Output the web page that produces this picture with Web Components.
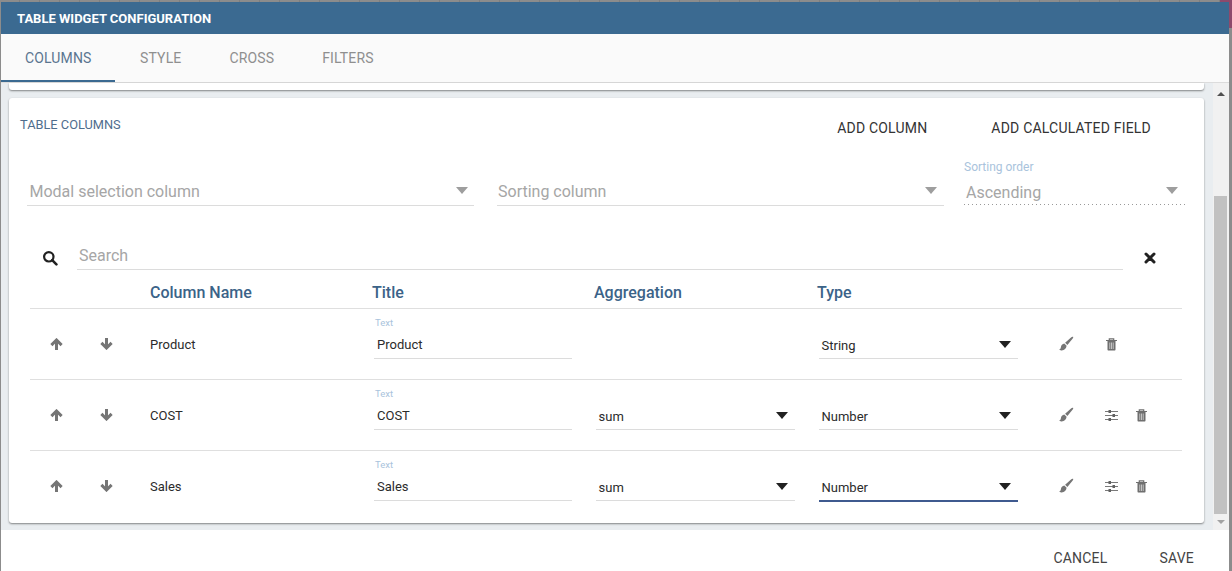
<!DOCTYPE html>
<html>
<head>
<meta charset="utf-8">
<title>Table widget configuration</title>
<style>
    html, body { margin: 0; height: 100%; overflow: hidden; }
    body {
        background:
            linear-gradient(#8d4a6c, #8d4a6c) right top / 12px 2px no-repeat,
            linear-gradient(#8d4a6c, #8d4a6c) right top / 3px 28px no-repeat,
            #8c8c8c repeating-linear-gradient(90deg, #8c8c8c 0 19px, #7f7f7f 19px 20px);
        font-family: Roboto, "Liberation Sans", sans-serif;
    }
</style>
</head>
<body>
<config-dialog heading="TABLE WIDGET CONFIGURATION">
    <column-row slot="rows" name="Product" coltype="String"></column-row>
    <column-row slot="rows" name="COST" aggregation="sum" coltype="Number"></column-row>
    <column-row slot="rows" name="Sales" aggregation="sum" coltype="Number" focused last></column-row>
</config-dialog>

<script>
const ICONS = {
    up: '<svg viewBox="0 0 13 12" width="13" height="12"><path d="M6.5 2V12M1.4 7.1 6.5 2l5.1 5.1" fill="none" stroke="#757575" stroke-width="3"/></svg>',
    down: '<svg viewBox="0 0 13 12" width="13" height="12"><path d="M6.5 0V10M1.4 4.9 6.5 10l5.1-5.1" fill="none" stroke="#757575" stroke-width="3"/></svg>',
    search: '<svg viewBox="0 0 16 16" width="16" height="16"><circle cx="6.8" cy="6.8" r="4.7" fill="none" stroke="#212121" stroke-width="2.2"/><path d="M10.2 10.2 14.4 14.4" stroke="#212121" stroke-width="2.6" stroke-linecap="round"/></svg>',
    close: '<svg viewBox="0 0 12 12" width="12" height="12"><path d="M2 2 10 10M10 2 2 10" stroke="#212121" stroke-width="3" stroke-linecap="round"/></svg>',
    brush: '<svg viewBox="0 0 16 16" width="16" height="16"><path d="M15 .8c.5.4.2 1.1-.3 1.7L9.4 8.9 7.1 6.8 13.3 1.3C13.9.8 14.5.4 15 .8Z" fill="#757575"/><path d="M6.3 7.6 8.6 9.7C8.4 12.3 6.5 14.2 3.6 14.4 2.6 14.5 1.6 14.2 1 13.6 2.4 13.3 2.7 12.6 2.9 11.3 3.1 9.3 4.5 8 6.3 7.6Z" fill="#757575"/></svg>',
    tune: '<svg viewBox="0 0 13 13" width="13" height="13"><path d="M0 2.5H13M0 6.5H13M0 10.5H13" stroke="#7a7a7a" stroke-width="1"/><path d="M3.5 1h2.5v3H3.5zM7.5 5h2.5v3H7.5zM3.5 9h2.5v3H3.5z" fill="#616161"/></svg>',
    trash: '<svg viewBox="0 0 11 13" width="11" height="13"><path d="M0 2.5h11M3.3 2.5V.8h4.4v1.7" fill="none" stroke="#6f6f6f" stroke-width="1.2"/><path d="M1.5 3v8.5c0 .6.4 1 1 1h6c.6 0 1-.4 1-1V3Z" fill="#6f6f6f"/><path d="M3.8 4.5v6.5M5.5 4.5v6.5M7.2 4.5v6.5" stroke="#d9d9d9" stroke-width=".8"/></svg>'
};

class IconButton extends HTMLElement {
    constructor() {
        super();
        this.attachShadow({ mode: 'open' });
    }

    connectedCallback() {
        this.shadowRoot.innerHTML = `
            <style>
                :host { display: inline-flex; align-items: center; justify-content: center; }
                svg { display: block; }
            </style>
            ${ICONS[this.getAttribute('icon')]}
        `;
    }
}

class SelectField extends HTMLElement {
    constructor() {
        super();
        this.attachShadow({ mode: 'open' });
    }

    connectedCallback() {
        const label = this.getAttribute('label');
        const value = this.getAttribute('value') || '';
        this.shadowRoot.innerHTML = `
            <style>
                :host {
                    display: block;
                    --line: #dcdcdc;
                    --text: #2b2b2b;
                    --arrow: #212121;
                    --size: 13px;
                    --arrow-right: 7px;
                }
                :host([disabled]) {
                    --text: #a6a6a6;
                    --arrow: #9e9e9e;
                    --size: 16px;
                    --arrow-right: 6px;
                }
                .label { height: 14px; font-size: 12px; line-height: 14px; margin-bottom: 4px; color: #a9c3dc; }
                .box {
                    position: relative;
                    display: flex;
                    align-items: center;
                    box-sizing: border-box;
                    height: 27px;
                    padding-top: 1px;
                    padding-left: var(--pad, 3px);
                    border-bottom: 1px solid var(--line);
                    font-size: var(--size);
                    color: var(--text);
                }
                :host([disabled]) .box { padding-top: 0; padding-bottom: 2px; }
                :host([disabled]) .arrow { margin-top: -5px; }
                :host([dotted]) .box {
                    border-bottom: none;
                    padding-top: 1px;
                    padding-bottom: 0;
                    background: linear-gradient(90deg, #999 1px, transparent 1px) left bottom / 4px 1px repeat-x;
                }
                :host([focused]) .box { border-bottom: 2px solid #3f5a8f; height: 28px; }
                .arrow {
                    position: absolute;
                    right: var(--arrow-right);
                    top: 50%;
                    margin-top: -4px;
                    border-left: 6.5px solid transparent;
                    border-right: 6.5px solid transparent;
                    border-top: 7px solid var(--arrow);
                }
            </style>
            ${label ? `<div class="label">${label}</div>` : ''}
            <div class="box"><span>${value}</span><span class="arrow"></span></div>
        `;
    }
}

class TextField extends HTMLElement {
    constructor() {
        super();
        this.attachShadow({ mode: 'open' });
    }

    connectedCallback() {
        this.shadowRoot.innerHTML = `
            <style>
                :host { display: block; }
                .label { height: 11px; font-size: 9.5px; line-height: 11px; padding-left: 1px; color: #a9c3dc; }
                .box {
                    box-sizing: border-box;
                    height: 31px;
                    padding: 9px 0 0 3px;
                    line-height: 16px;
                    font-size: 13px;
                    color: #2b2b2b;
                    border-bottom: 1px solid #dcdcdc;
                }
            </style>
            <div class="label">${this.getAttribute('label')}</div>
            <div class="box">${this.getAttribute('value')}</div>
        `;
    }
}

class ColumnRow extends HTMLElement {
    constructor() {
        super();
        this.attachShadow({ mode: 'open' });
    }

    connectedCallback() {
        const name = this.getAttribute('name');
        const aggregation = this.getAttribute('aggregation');
        const focused = this.hasAttribute('focused') ? 'focused' : '';
        this.shadowRoot.innerHTML = `
            <style>
                :host {
                    display: grid;
                    grid-template-columns: 53px 46px 243px 222px 223px 223px 1fr;
                    align-items: center;
                    box-sizing: border-box;
                    height: 71px;
                    border-bottom: 1px solid #dfdfdf;
                    font-size: 13px;
                    color: #2b2b2b;
                }
                :host([last]) { height: 70px; border-bottom: none; }
                .name { padding-left: 21px; }
                .cell { align-self: start; padding: 0 22px 0 2px; }
                .title { padding-top: 8px; }
                .select { padding-top: 23px; }
                select-field { --pad: 2.5px; }
                .tools { display: flex; align-items: center; padding-left: 18px; }
                .brush { width: 16px; margin-right: 31px; }
                .brush.solo { margin-right: 32px; }
                .tune { width: 13px; margin-right: 18px; }
            </style>
            <icon-button icon="up"></icon-button>
            <icon-button icon="down"></icon-button>
            <div class="name">${name}</div>
            <div class="cell title"><text-field label="Text" value="${name}"></text-field></div>
            <div class="cell select">${aggregation ? `<select-field value="${aggregation}"></select-field>` : ''}</div>
            <div class="cell select"><select-field value="${this.getAttribute('coltype')}" ${focused}></select-field></div>
            <div class="tools">
                <icon-button class="brush ${aggregation ? '' : 'solo'}" icon="brush"></icon-button>
                ${aggregation ? '<icon-button class="tune" icon="tune"></icon-button>' : ''}
                <icon-button icon="trash"></icon-button>
            </div>
        `;
    }
}

class ConfigDialog extends HTMLElement {
    constructor() {
        super();
        this.attachShadow({ mode: 'open' });
    }

    connectedCallback() {
        const tabs = ['COLUMNS', 'STYLE', 'CROSS', 'FILTERS'];
        this.shadowRoot.innerHTML = `
            <style>
                :host {
                    display: flex;
                    flex-direction: column;
                    box-sizing: border-box;
                    height: 571px;
                    margin: 0 3px 0 1px;
                    padding-top: 2px;
                    font-family: Roboto, "Liberation Sans", sans-serif;
                }
                header {
                    height: 32px;
                    flex: none;
                    display: flex;
                    align-items: center;
                    padding-left: 16px;
                    background: #3b6a91;
                    color: #fff;
                    font-size: 13px;
                    font-weight: 700;
                }
                nav {
                    display: flex;
                    flex: none;
                    box-sizing: border-box;
                    height: 49px;
                    background: #fafafa;
                    border-bottom: 1px solid #dcdcdc;
                }
                nav a {
                    box-sizing: border-box;
                    height: 48px;
                    line-height: 48px;
                    padding: 0 24px;
                    font-size: 14px;
                    letter-spacing: .15px;
                    color: #8f8f8f;
                }
                nav a.active { color: #5b7590; border-bottom: 2px solid #3b6a91; width: 114px; margin-right: 1px; white-space: nowrap; }
                .body {
                    flex: 1;
                    min-height: 0;
                    display: flex;
                    background: #e9edf0;
                }
                .scroller {
                    flex: 1;
                    min-width: 0;
                    padding: 0 9px 0 8px;
                }
                .stub {
                    height: 7px;
                    background: #fff;
                    border-radius: 0 0 3px 3px;
                    box-shadow: 0 1px 2px rgba(0,0,0,.45);
                    margin-bottom: 8px;
                }
                .card {
                    box-sizing: border-box;
                    height: 425px;
                    padding: 0 22px 0 11px;
                    background: #fff;
                    border-radius: 3px;
                    box-shadow: 0 1px 2px rgba(0,0,0,.45);
                }
                .title-row {
                    display: flex;
                    justify-content: space-between;
                    height: 62px;
                }
                .title { font-size: 12.8px; line-height: 14px; padding-top: 20px; color: #4f6d8d; }
                .actions { display: flex; gap: 64px; padding: 22px 31px 0 0; }
                .actions span { font-size: 14px; line-height: 16px; letter-spacing: .2px; color: #333; }
                .filters {
                    display: grid;
                    grid-template-columns: 447px 447px 222px;
                    column-gap: 23px;
                    margin-left: 7px;
                    align-items: end;
                }
                .filters select-field:nth-child(1) { --pad: 2.5px; }
                .filters select-field:nth-child(2) { --pad: 1px; --arrow-right: 7px; }
                .filters select-field:nth-child(3) { margin: 0 3px 1px -3px; --pad: 2px; --arrow-right: 8px; }
                .search {
                    display: flex;
                    align-items: center;
                    height: 35px;
                    margin-top: 31px;
                    margin-left: 10px;
                }
                .search icon-button:first-child { width: 47px; justify-content: flex-start; padding-left: 12px; box-sizing: border-box; margin-top: 6px; }
                .search .input {
                    flex: 1;
                    box-sizing: border-box;
                    height: 30px;
                    padding: 6px 0 0 2px;
                    line-height: 20px;
                    font-size: 16px;
                    color: #a6a6a6;
                    border-bottom: 1px solid #dcdcdc;
                }
                .search .x { width: 53px; margin-right: 6px; margin-top: 7px; }
                .table { margin-left: 10px; }
                .head {
                    display: grid;
                    grid-template-columns: 342px 222px 223px 1fr;
                    height: 37px;
                    padding-top: 5px;
                    box-sizing: border-box;
                    border-bottom: 1px solid #dfdfdf;
                    align-items: center;
                    font-size: 16px;
                    font-weight: 500;
                    color: #3b6388;
                }
                .head span:first-child { padding-left: 120px; }
                .bar {
                    flex: none;
                    width: 16px;
                    background: #f1f1f1;
                    position: relative;
                }
                .thumb {
                    position: absolute;
                    left: 1px;
                    right: 2px;
                    top: 113px;
                    height: 318px;
                    background: #c1c1c1;
                }
                .tri { position: absolute; left: 4px; border-left: 4px solid transparent; border-right: 4px solid transparent; }
                .tri.up { top: 9px; border-bottom: 4px solid #505050; }
                .tri.down { bottom: 6px; border-top: 4px solid #a3a3a3; }
                footer {
                    flex: none;
                    display: flex;
                    justify-content: flex-end;
                    align-items: center;
                    gap: 52px;
                    height: 41px;
                    padding: 15px 35px 0 0;
                    box-sizing: border-box;
                    background: #fff;
                    font-size: 14px;
                    letter-spacing: .2px;
                    color: #444;
                }
            </style>
            <header>${this.getAttribute('heading')}</header>
            <nav>
                ${tabs.map((t, i) => `<a class="${i === 0 ? 'active' : ''}">${t}</a>`).join('')}
            </nav>
            <div class="body">
                <div class="scroller">
                    <div class="stub"></div>
                    <div class="card">
                        <div class="title-row">
                            <div class="title">TABLE COLUMNS</div>
                            <div class="actions"><span>ADD COLUMN</span><span>ADD CALCULATED FIELD</span></div>
                        </div>
                        <div class="filters">
                            <select-field disabled value="Modal selection column"></select-field>
                            <select-field disabled value="Sorting column"></select-field>
                            <select-field disabled dotted label="Sorting order" value="Ascending"></select-field>
                        </div>
                        <div class="search">
                            <icon-button icon="search"></icon-button>
                            <div class="input">Search</div>
                            <icon-button class="x" icon="close"></icon-button>
                        </div>
                        <div class="table">
                            <div class="head"><span>Column Name</span><span>Title</span><span>Aggregation</span><span>Type</span></div>
                            <slot name="rows"></slot>
                        </div>
                    </div>
                </div>
                <div class="bar">
                    <span class="tri up"></span>
                    <div class="thumb"></div>
                    <span class="tri down"></span>
                </div>
            </div>
            <footer><span>CANCEL</span><span>SAVE</span></footer>
        `;
    }
}

customElements.define('icon-button', IconButton);
customElements.define('select-field', SelectField);
customElements.define('text-field', TextField);
customElements.define('column-row', ColumnRow);
customElements.define('config-dialog', ConfigDialog);
</script>
</body>
</html>
